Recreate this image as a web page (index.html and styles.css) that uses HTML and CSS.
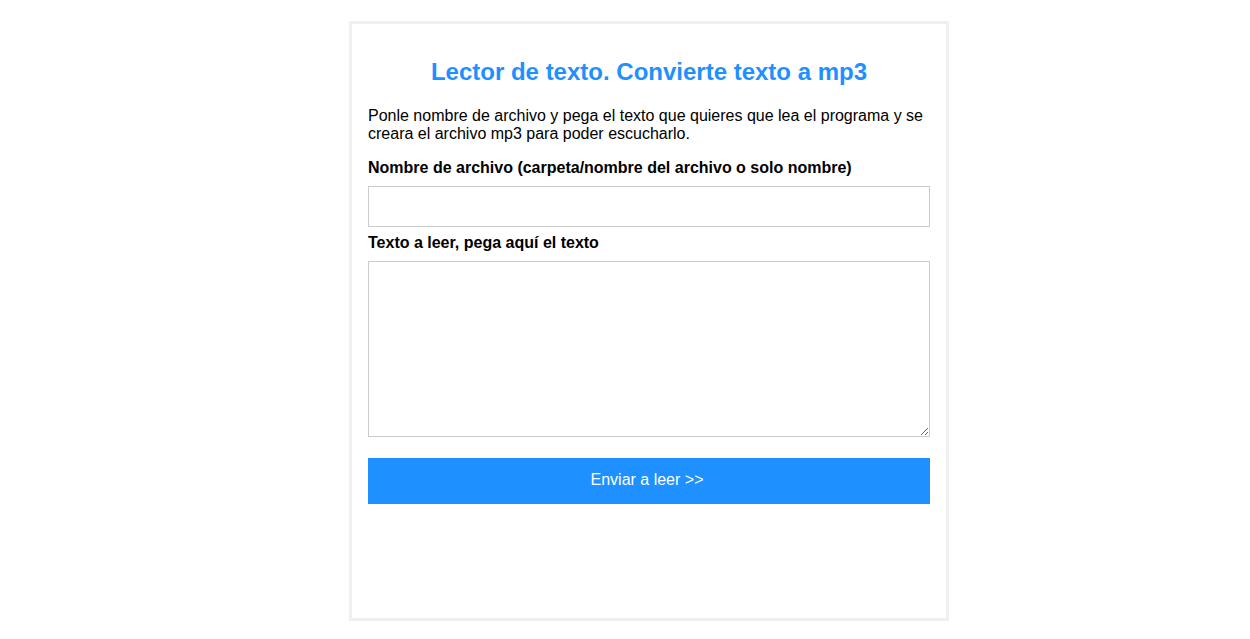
FILE: index.html
```html
<!DOCTYPE html>
<html lang="es">
<head>
<meta charset="utf-8">
<title>Lector de texto</title>
<link rel="stylesheet" href="styles.css">
</head>
<body>
<div class="card">
  <h1 class="title">Lector de texto. Convierte texto a mp3</h1>
  <p class="intro">Ponle nombre de archivo y pega el texto que quieres que lea el programa y se creara el archivo mp3 para poder escucharlo.</p>
  <form class="form">
    <label class="label" for="nombre">Nombre de archivo (carpeta/nombre del archivo o solo nombre)</label>
    <input class="field" id="nombre" type="text">
    <label class="label label-second" for="texto">Texto a leer, pega aquí el texto</label>
    <textarea class="area" id="texto"></textarea>
    <button class="send" type="button">Enviar a leer &gt;&gt;</button>
  </form>
</div>
</body>
</html>
```
FILE: styles.css
```css
html, body {
  margin: 0;
  padding: 0;
  background: #fff;
}
body {
  font-family: "Liberation Sans", Arial, sans-serif;
  font-size: 16px;
  color: #000;
}
.card {
  box-sizing: border-box;
  width: 600px;
  height: 600px;
  margin: 21px 0 0 349px;
  border: 3px solid #f0f0f0;
  padding: 34px 16px 16px;
}
.title {
  margin: 0;
  text-align: center;
  color: #1e90ff;
  font-size: 24px;
  font-weight: bold;
  line-height: 28px;
}
.intro {
  margin: 21px 0 16px;
  line-height: 18px;
}
.form {
  display: flex;
  flex-direction: column;
}
.label {
  font-weight: bold;
  line-height: 18px;
}
.label-second {
  margin-top: 7px;
}
.field {
  box-sizing: border-box;
  margin: 9px 0 0;
  width: 562px;
  height: 41px;
  border: 1px solid #ccc;
  padding: 0 8px;
  font: inherit;
  outline: none;
}
.area {
  box-sizing: border-box;
  margin: 9px 0 0;
  width: 562px;
  height: 176px;
  border: 1px solid #ccc;
  padding: 8px;
  font: inherit;
  outline: none;
}
.send {
  margin-top: 21px;
  width: 562px;
  height: 46px;
  border: 0;
  padding: 0 4px 2px 0;
  background: #1e90ff;
  color: #fff;
  font: inherit;
  font-size: 16px;
  cursor: pointer;
}
```
